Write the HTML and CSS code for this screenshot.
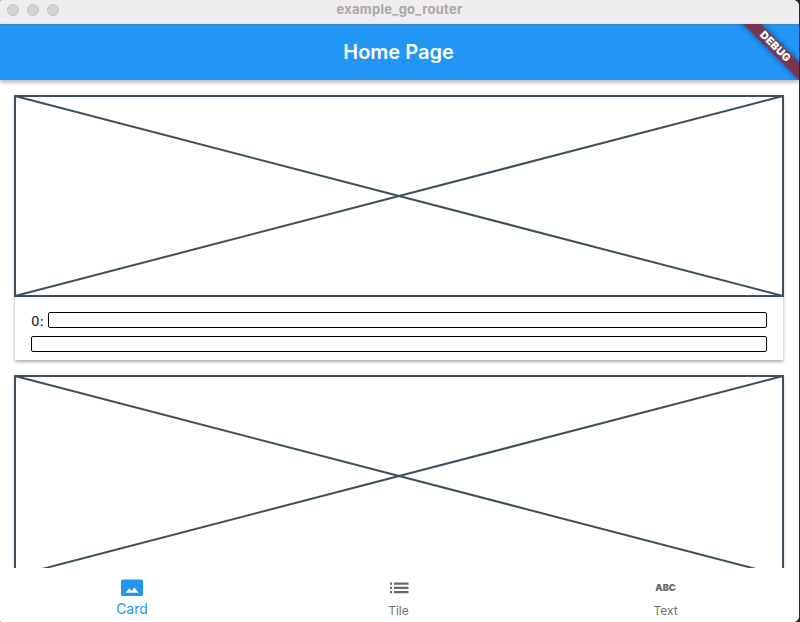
FILE: index.html
```html
<!DOCTYPE html>
<html lang="en">
<head>
<meta charset="utf-8">
<title>example_go_router</title>
<link rel="stylesheet" href="styles.css">
</head>
<body>
<div class="window">
  <header class="titlebar">
    <div class="lights"><i></i><i></i><i></i></div>
    <span class="window-title">example_go_router</span>
  </header>
  <div class="appbar">
    <h1>Home Page</h1>
    <div class="banner-clip"><div class="banner"><span>DEBUG</span></div></div>
  </div>
  <main class="list">
    <article class="card">
      <svg class="placeholder" viewBox="0 0 770 202"><path d="M1 1H769V201H1ZL769 201M769 1L1 201"/></svg>
      <div class="card-body">
        <div class="row"><span class="index">0:</span><div class="field"></div></div>
        <div class="row"><div class="field"></div></div>
      </div>
    </article>
    <article class="card">
      <svg class="placeholder" viewBox="0 0 770 202"><path d="M1 1H769V201H1ZL769 201M769 1L1 201"/></svg>
      <div class="card-body"></div>
    </article>
  </main>
  <nav class="tabs">
    <a class="tab active">
      <svg class="icon" viewBox="0 0 24 18"><path fill="#2196f3" d="M2.500 0.500H21.500Q23 0.500 23 2V15.500Q23 17 21.500 17H2.500Q1 17 1 15.500V2Q1 0.500 2.500 0.500Z"/><path fill="#fff" d="M5.500 13.700L9 9.500L11.300 12L14.500 8.500L18.500 13.700Z"/></svg>
      <span>Card</span>
    </a>
    <a class="tab">
      <svg class="icon" viewBox="0 0 24 18"><path fill="#686868" d="M3 3.500H5V5.800H3ZM7 3.500H21.500V5.800H7ZM3 7.800H5V10.100H3ZM7 7.800H21.500V10.100H7ZM3 12H5V14.200H3ZM7 12H21.500V14.200H7Z"/></svg>
      <span>Tile</span>
    </a>
    <a class="tab">
      <b class="icon abc">ABC</b>
      <span>Text</span>
    </a>
  </nav>
</div>
</body>
</html>
```
FILE: styles.css
```css
* { box-sizing: border-box; }
body {
  margin: 0;
  height: 622px;
  overflow: hidden;
  background: #23292c;
  font-family: Inter, Roboto, sans-serif;
}
.window {
  display: flex;
  flex-direction: column;
  width: 799px;
  height: 622px;
  overflow: hidden;
  background: #fff;
  border-radius: 2px 6px 6px 2px;
}
.titlebar {
  display: grid;
  grid-template-columns: 80px 1fr 80px;
  align-items: center;
  flex: none;
  height: 24px;
  padding-bottom: 4px;
  background: #f0edee;
}
.lights { display: flex; gap: 8px; padding-left: 7px; }
.lights i {
  width: 12px;
  height: 12px;
  border: 1px solid #c4c2c3;
  border-radius: 50%;
  background: #d3d1d2;
}
.window-title {
  text-align: center;
  color: #a9a7a8;
  font-size: 13px;
  letter-spacing: .26px;
  line-height: 18px;
  margin-bottom: 2px;
  font-weight: 700;
}
.appbar {
  position: relative;
  z-index: 2;
  display: flex;
  align-items: center;
  justify-content: center;
  flex: none;
  height: 56px;
  background: #2196f5;
  border-top: 1px solid #3187d0;
  box-shadow: 0 2px 4px rgba(0,0,0,.22), 0 3px 5px rgba(0,0,0,.1);
}
h1 {
  margin: 0;
  padding: 0 2px 2px 0;
  color: #fff;
  font-size: 20px;
  line-height: 28px;
  font-weight: 600;
}
.banner-clip {
  position: absolute;
  top: -1px;
  right: 0;
  width: 70px;
  height: 56px;
  overflow: hidden;
}
.banner {
  position: absolute;
  left: -4px;
  top: 17px;
  width: 100px;
  height: 12px;
  transform: rotate(45deg);
  background: #76364f;
  box-shadow: 0 0 6px rgba(0,0,0,.5);
  color: #fff;
  font-size: 10.7px;
  letter-spacing: .25px;
  line-height: 12px;
  font-weight: 900;
  text-align: center;
}
.list {
  display: flex;
  flex-direction: column;
  gap: 14px;
  flex: 1;
  min-height: 0;
  overflow: hidden;
  padding: 15px 15px 0 14px;
}
.card {
  position: relative;
  flex: none;
  height: 266px;
}
.card::before {
  content: "";
  position: absolute;
  inset: 1px;
  background: #fff;
  box-shadow: 0 2px 3px rgba(0,0,0,.26), 0 1px 4px rgba(0,0,0,.12);
}
.placeholder {
  position: relative;
  display: block;
  width: 770px;
  height: 202px;
  fill: none;
  stroke: #3f505a;
  stroke-width: 2;
}
.card-body {
  position: relative;
  display: flex;
  flex-direction: column;
  gap: 8px;
  padding: 15px 17px 0;
}
.row { display: flex; align-items: center; height: 16px; }
.index {
  flex: none;
  width: 17px;
  padding-top: 2px;
  color: #222;
  font-family: "DejaVu Sans", sans-serif;
  font-size: 13.5px;
  line-height: 16px;
}
.field {
  flex: 1;
  height: 16px;
  border: 1px solid #000;
  border-radius: 2px;
}
.tabs {
  position: relative;
  z-index: 3;
  display: grid;
  grid-template-columns: 265px 268px 266px;
  flex: none;
  height: 54px;
  background: #fff;
}
.tab {
  display: flex;
  flex-direction: column;
  align-items: center;
  padding: 11px 1px 0 0;
  color: #707070;
  font-size: 12px;
  line-height: 20px;
}
.tab > span { margin-top: 4px; }
.active { color: #2196f3; font-size: 14px; }
.active > span { margin-top: 2px; }
.icon { flex: none; width: 24px; height: 18px; }
.abc {
  color: #686868;
  font-size: 9.2px;
  line-height: 18px;
  font-weight: 900;
  text-align: center;
}
```
